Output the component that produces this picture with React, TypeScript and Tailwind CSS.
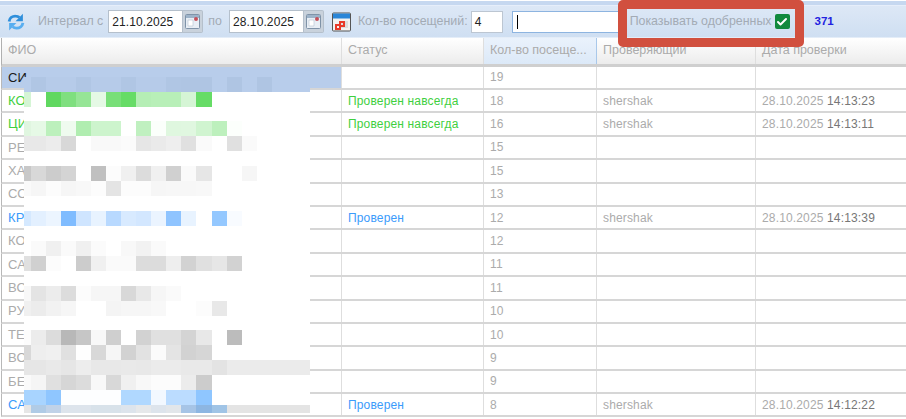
import React from 'react';
import { Check } from 'lucide-react';

type Row = {
  name: string;
  status?: string;
  visits: number;
  checker?: string;
  time?: string;
  tone?: 'green' | 'blue' | 'selected';
};

const rows: Row[] = [
  { name: 'СИ', visits: 19, tone: 'selected' },
  { name: 'КО', status: 'Проверен навсегда', visits: 18, checker: 'shershak', time: '14:13:23', tone: 'green' },
  { name: 'ЦИ', status: 'Проверен навсегда', visits: 16, checker: 'shershak', time: '14:13:11', tone: 'green' },
  { name: 'РЕ', visits: 15 },
  { name: 'ХА', visits: 15 },
  { name: 'СО', visits: 13 },
  { name: 'КР', status: 'Проверен', visits: 12, checker: 'shershak', time: '14:13:39', tone: 'blue' },
  { name: 'КО', visits: 12 },
  { name: 'СА', visits: 11 },
  { name: 'ВО', visits: 11 },
  { name: 'РУ', visits: 10 },
  { name: 'ТЕ', visits: 10 },
  { name: 'ВО', visits: 9 },
  { name: 'БЕ', visits: 9 },
  { name: 'СА', status: 'Проверен', visits: 8, checker: 'shershak', time: '14:12:22', tone: 'blue' },
];

// mosaic that hides the names: [top, height, row fill, cells...]
const mosaic: [number, number, string, string[]][] = [
  [1, 15, '#b8cdeb', ['#b8cdeb', '#b0c6e4', '#b6cbe9', '#b6cbe9', '#b0c6e4', '#b6cbe9', '#b6cbe9', '#b0c6e4', '#b6cbe9', '#b6cbe9', '#b0c6e4', '#afc5e3', '#afc5e3', '#b8cdeb', '#afc5e3', '#b8cdeb', '#afc5e3']],
  [16, 15, '#ffffff', ['#d5f5d5', '#ffffff', '#60d860', '#7fdf7f', '#96e596', '#e5f9e5', '#78df78', '#66dc66', '#b5eeb5', '#b8efb8', '#b8efb8', '#d5f5d5', '#66dc66']],
  [45, 15, '#ffffff', ['#e0f6e0', '#e6f9e6', '#bcf0bc', '#effbef', '#b0edb0', '#cdf4cd', '#cdf4cd', '#ffffff', '#c0f0c0', '#fbfffb', '#dff7df', '#e0f7e0', '#d0f4d0', '#bdf0bd', '#fcfffc']],
  [60, 15, '#ffffff', ['#e8e8e8', '#e8e8e8', '#ececec', '#d8d8d8', '#ffffff', '#f9f9f9', '#f9f9f9', '#fbfbfb', '#e6e6e6', '#eaeaea', '#eeeeee', '#e0e0e0', '#fafafa', '#ffffff', '#e0e0e0', '#fafafa']],
  [90, 15, '#ffffff', ['#c8c8c8', '#d8d8d8', '#cccccc', '#d4d4d4', '#ffffff', '#c0c0c0', '#fcfcfc', '#f0f0f0', '#dcdcdc', '#f0f0f0', '#d0d0d0', '#fafafa', '#e6e6e6', '#ffffff', '#ffffff', '#f6f6f6']],
  [105, 15, '#ffffff', ['#fafafa', '#f6f6f6', '#fcfcfc', '#f6f6f6', '#f8f8f8', '#fcfcfc', '#e4e4e4', '#fcfcfc', '#fcfcfc', '#f6f6f6', '#f7f7f7', '#f7f7f7', '#f8f8f8']],
  [135, 15, '#ffffff', ['#d5e9ff', '#e3f0ff', '#ecf5ff', '#7fbcff', '#cfe5ff', '#e8f3ff', '#b8d9ff', '#d8eaff', '#d3e7ff', '#ebf4ff', '#8fc4ff', '#e8f3ff', '#ffffff', '#94c8ff', '#f8fbff']],
  [165, 15, '#ffffff', ['#ffffff', '#fafafa', '#f0f0f0', '#fafafa', '#f0f0f0', '#fbfbfb', '#ffffff', '#f8f8f8', '#f2f2f2', '#fafafa']],
  [180, 15, '#ffffff', ['#e0e0e0', '#d0d0d0', '#fcfcfc', '#ffffff', '#cccccc', '#f0f0f0', '#fafafa', '#fafafa', '#dcdcdc', '#dcdcdc', '#eeeeee', '#d2d2d2', '#e0e0e0', '#e6e6e6', '#d2d2d2']],
  [210, 15, '#ffffff', ['#f8f8f8', '#e4e4e4', '#ececec', '#dcdcdc', '#fcfcfc', '#f6f6f6', '#f6f6f6', '#d8d8d8', '#e8e8e8', '#f6f6f6', '#fafafa']],
  [225, 15, '#ffffff', ['#f0f0f0', '#ececec', '#f2f2f2', '#f6f6f6', '#ffffff', '#ffffff', '#f4f4f4', '#f6f6f6', '#f6f6f6', '#f8f8f8', '#ffffff', '#ffffff', '#fcfcfc', '#e8e8e8']],
  [254, 15, '#ffffff', ['#fcfcfc', '#ececec', '#dcdcdc', '#b8b8b8', '#c6c6c6', '#f8f8f8', '#cfcfcf', '#ffffff', '#d2d2d2', '#e0e0e0', '#e0e0e0', '#d4d4d4', '#e8e8e8', '#ffffff', '#bcbcbc']],
  [269, 15, '#ffffff', ['#d8d8d8', '#eeeeee', '#f0f0f0', '#e0e0e0', '#fefefe', '#d8d8d8', '#f6f6f6', '#d2d2d2', '#e2e2e2', '#fbfbfb', '#e4e4e4', '#d2d2d2', '#d6d6d6']],
  [284, 15, '#ebebeb', ['#e6e6e6', '#e6e6e6', '#e9e9e9', '#e6e6e6', '#ededed', '#e8e8e8', '#e8e8e8', '#e9e9e9', '#e8e8e8', '#ebebeb', '#ebebeb', '#e9e9e9', '#e9e9e9', '#e3e3e3']],
  [299, 15, '#ffffff', ['#fafafa', '#f5f5f5', '#e0e0e0', '#d6d6d6', '#dcdcdc', '#f8f8f8', '#d8d8d8', '#f0f0f0', '#f8f8f8', '#fcfcfc', '#fcfcfc', '#ececec', '#cccccc']],
  [314, 15, '#ffffff', ['#a8d4ff', '#a8d4ff', '#8fc6ff', '#fdfeff', '#fdfeff', '#fdfeff', '#fdfeff', '#b0d8ff', '#b0d8ff', '#f2f8ff', '#bbdcff', '#bbdcff', '#8fc6ff']],
  [329, 8, '#e4e4e4', ['#e6e6e6', '#b0cbe6', '#c0d2e8', '#dde4ec', '#dde4ec', '#d8e2ea', '#d8e2ea', '#dde4ec', '#e6e8ea', '#dde4ec', '#e2e6ea', '#a6c4e6', '#8db6e2', '#a0c4e6']],
];

const toneText: Record<string, string> = {
  green: 'text-[#3fcf3f]',
  blue: 'text-[#3b9bfb]',
  selected: 'text-[#1a1a1a]',
};

const Refresh = () => (
  <svg className="-ml-px" width="20" height="20" viewBox="0 0 18 18" fill="none">
    <path d="M2.800 8.500C3.200 5.400 5.800 3.600 8.600 3.700c1.300 0 2.500.4 3.400 1.200" stroke="#2f8fdb" strokeWidth="2.600" />
    <path d="M15.200 1.500v6.800H8.600z" fill="#2f8fdb" />
    <path d="M15.200 9.800c-.4 3-3 4.800-5.800 4.700-1.300 0-2.500-.4-3.400-1.200" stroke="#58aef0" strokeWidth="2.600" />
    <path d="M2.800 16.700V9.900h6.600z" fill="#58aef0" />
  </svg>
);

const CalendarTrigger = () => (
  <span className="flex h-[23px] w-[20px] items-center justify-center rounded-r-[2px] border border-l-0 border-[#b5c0cc] bg-[#c9d2dc]">
    <svg width="15" height="15" viewBox="0 0 15 15">
      <rect x="0.500" y="0.500" width="14" height="14" rx="1" fill="#e8eef5" stroke="#7f93a8" />
      <rect x="1" y="1" width="13" height="3" fill="#9db3c9" />
      <path d="M3 6h5v6H3z" fill="#fff" stroke="#b5c3d1" strokeWidth="0.600" />
      <circle cx="11" cy="5" r="2" fill="#c4505a" />
    </svg>
  </span>
);

const DateField = ({ value }: { value: string }) => (
  <span className="flex items-center">
    <span className="flex h-[23px] w-[75px] items-center border border-[#b5c0cc] bg-white pl-[3px] text-[12px] tracking-[0.1px] text-[#222]">
      {value}
    </span>
    <CalendarTrigger />
  </span>
);

const Cell = ({ width, className, children }: { width: string; className?: string; children?: React.ReactNode }) => (
  <div className={`flex h-full shrink-0 items-center overflow-hidden whitespace-nowrap border-r border-[#dedede] pl-[6px] ${width} ${className ?? ''}`}>
    {children}
  </div>
);

export default function App() {
  return (
    <div className="relative h-[419px] w-[906px] overflow-hidden bg-white font-['Liberation_Sans',Arial,sans-serif] text-[12px] text-[#ababab]">
      {/* top strip */}
      <div className="mt-px h-[4px] bg-[#c6d8f0]" />
      <div className="h-px bg-[#e6eefa]" />

      {/* toolbar */}
      <div className="flex h-[32px] items-center border-b border-[#e4edf8] bg-gradient-to-b from-[#dde8f6] to-[#cfdff2] pl-[7px] text-[12.4px] text-[#a3abb5]">
        <Refresh />
        <span className="ml-[12px]">Интервал с</span>
        <span className="ml-[5px]"><DateField value="21.10.2025" /></span>
        <span className="ml-[5px]">по</span>
        <span className="ml-[7px]"><DateField value="28.10.2025" /></span>
        <svg className="ml-[8px]" width="19" height="20" viewBox="0 0 19 20">
          <rect x="0.500" y="1" width="18" height="18" rx="1" fill="#f2f2f2" stroke="#555" />
          <rect x="1" y="1.500" width="17" height="5" fill="#2a86d8" />
          <path d="M9 9h7v7H9z" fill="#dcdcdc" />
          <path d="M4 17v-4h4v-3h4v4H8v3z" fill="none" stroke="#e83a2a" strokeWidth="2" />
        </svg>
        <span className="ml-[7px]">Кол-во посещений:</span>
        <span className="ml-[3px] flex h-[22px] w-[32px] items-center border border-[#bcc6d2] bg-white pl-[3px] text-[12px] text-[#222]">4</span>
        <span className="ml-[9px] flex h-[22px] w-[110px] items-center border border-[#8db4e0] bg-white pl-[4px]">
          <span className="h-[14px] w-px bg-black" />
        </span>
        <span className="ml-[8px]">Показывать одобренных</span>
        <span className="ml-[3px] flex h-[15px] w-[15px] items-center justify-center rounded-[2px] bg-[#118a3e]">
          <Check size={12} strokeWidth={4} className="text-white" />
        </span>
        <span className="ml-[25px] text-[11.500px] font-bold text-[#2222e0]">371</span>
      </div>

      {/* header */}
      <div className="ml-px flex h-[28.6px] border-b-[3px] border-l border-[#cfcfcf] border-l-[#b0b0b0] bg-gradient-to-b from-white to-[#ececec] text-[12.5px]">
        <Cell width="w-[340px]">ФИО</Cell>
        <Cell width="w-[142px]">Статус</Cell>
        <Cell width="w-[113px]" className="border-r-[#a9c8ea] bg-gradient-to-b from-[#eaf2fc] to-[#dce9f8]">Кол-во посеще...</Cell>
        <Cell width="w-[159px]">Проверяющий</Cell>
        <Cell width="w-[150px]" className="border-r-0">Дата проверки</Cell>
      </div>

      {/* rows */}
      {rows.map((row, i) => (
        <div key={i} className="ml-px flex h-[23.4px] border-b-2 border-l border-[#d6d6d6] border-l-[#b8b8b8] tracking-[0.15px]">
          <Cell width="w-[340px]" className={row.tone === 'selected' ? 'bg-[#b8cdeb] text-[13px]' : 'text-[13px]'}>
            <span className={row.tone ? toneText[row.tone] : ''}>{row.name}</span>
          </Cell>
          <Cell width="w-[142px]">
            <span className={row.tone ? toneText[row.tone] : ''}>{row.status}</span>
          </Cell>
          <Cell width="w-[113px]">{row.visits}</Cell>
          <Cell width="w-[159px]">{row.checker}</Cell>
          <Cell width="w-[150px]" className="border-r-0">
            {row.time && (
              <>
                28.10.2025&nbsp;<span className="text-[#777]">{row.time}</span>
              </>
            )}
          </Cell>
        </div>
      ))}

      {/* pixelated patch over the names */}
      <div className="absolute left-[24px] top-[77px] h-[336px] w-[286px] bg-white">
        <svg width="286" height="336" viewBox="0 1 286 336" shapeRendering="crispEdges">
          {mosaic.map(([top, height, fill, cells]) => (
            <g key={top}>
              <rect x="0" y={top} width="286" height={height} fill={fill} />
              {cells.map((c, j) => (
                <rect key={j} x={j === 0 ? 0 : 6.7 + (j - 1) * 15.07} y={top} width={j === 0 ? 6.7 : 15.07} height={height} fill={c} />
              ))}
            </g>
          ))}
        </svg>
      </div>

      {/* red highlight box */}
      <div className="absolute left-[618px] top-0 h-[47px] w-[186px] rounded-[5px] border-[9px] border-[#d1503f]" />
    </div>
  );
}
